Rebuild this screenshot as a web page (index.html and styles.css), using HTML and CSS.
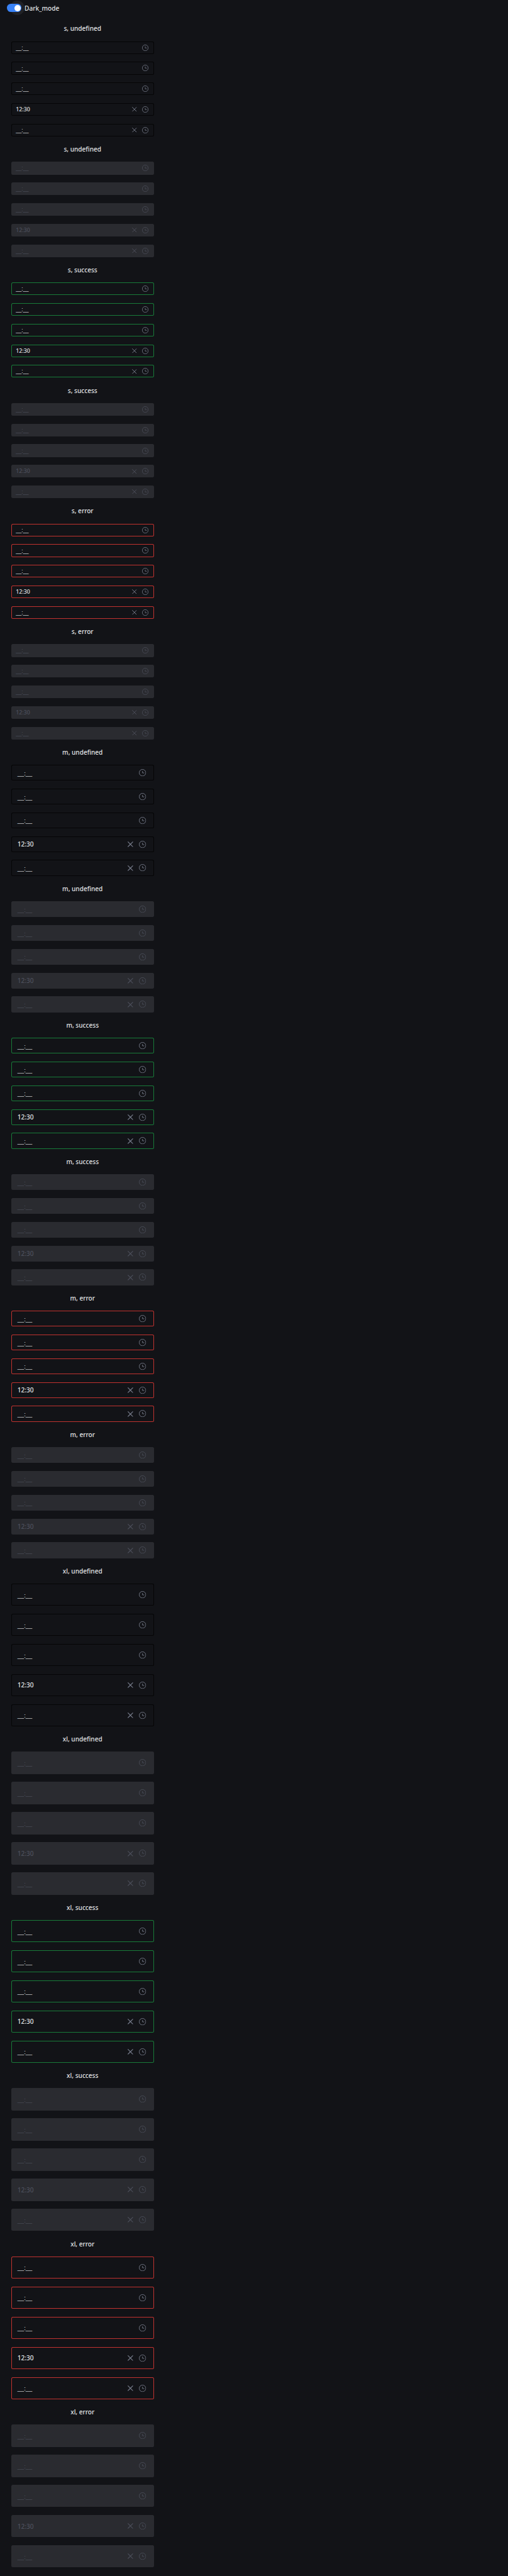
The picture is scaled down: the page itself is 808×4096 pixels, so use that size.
FILE: index.html
```html
<!DOCTYPE html>
<html lang="en">
<head>
<meta charset="utf-8">
<title>Time input</title>
<link rel="stylesheet" href="styles.css">
</head>
<body>
<svg class="sprite" aria-hidden="true">
  <symbol id="clock" viewBox="0 0 18 18"><circle cx="9" cy="9" r="8.3"/><path d="M9 4.8V9.5H13.4"/></symbol>
  <symbol id="cross" viewBox="0 0 14 14"><path d="M.5.5l13 13M13.5.5l-13 13"/></symbol>
</svg>
<header class="toolbar">
  <span class="switch"><span class="thumb"></span></span>
  <span class="switch-label">Dark_mode</span>
</header>
<main class="stories" id="stories"></main>
<script src="main.js"></script>
</body>
</html>
```
FILE: styles.css
```css
:root {
  --u: 0.631px;
  --bg: #121317;
  --text: #e1e3e6;
  --icon: #7e8494;
}
* { box-sizing: border-box; }
body {
  margin: 0;
  background: var(--bg);
  color: var(--text);
  font-family: "Noto Sans", sans-serif;
  font-size: calc(16 * var(--u));
  font-weight: 500;
  overflow: hidden;
}
.sprite { display: none; }
.toolbar {
  display: flex;
  align-items: center;
  height: calc(40 * var(--u));
  padding-left: calc(18 * var(--u));
}
.switch {
  display: flex;
  align-items: center;
  justify-content: flex-end;
  width: calc(36 * var(--u));
  height: calc(20 * var(--u));
  padding-right: calc(2 * var(--u));
  border-radius: calc(10 * var(--u));
  background: #3a83f7;
}
.thumb {
  position: relative;
  width: calc(16 * var(--u));
  height: calc(16 * var(--u));
  border-radius: 50%;
  background: #fff;
}
/* Halo sits behind the track so the track keeps its own colour */
.thumb::before {
  content: "";
  position: absolute;
  z-index: -1;
  inset: calc(-10 * var(--u));
  border-radius: 50%;
  background: #212226;
}
.switch-label { margin-left: calc(8 * var(--u)); }
.stories {
  width: calc(360 * var(--u));
  margin-left: calc(28 * var(--u));
}
.title {
  display: flex;
  align-items: center;
  justify-content: center;
  height: calc(64 * var(--u));
}
.fields {
  display: flex;
  flex-direction: column;
  gap: calc(20 * var(--u));
}
.field {
  display: flex;
  align-items: center;
  height: calc(40 * var(--u));
  padding: 0 calc(19 * var(--u)) 0 calc(16 * var(--u));
  border-radius: calc(4 * var(--u));
  box-shadow: inset 0 0 0 1px var(--line, #050506);
}
.value { flex: 1; }
.mask {
  font-family: "Liberation Sans", sans-serif;
  font-size: 0.925em;
  font-weight: 400;
}
.icon {
  fill: none;
  stroke: var(--icon);
  stroke-width: 1.35;
  overflow: visible;
}
.clock { width: calc(18 * var(--u)); height: calc(18 * var(--u)); }
.cross {
  width: calc(14 * var(--u));
  height: calc(14 * var(--u));
  margin-right: calc(16 * var(--u));
  stroke-width: 1.7;
}
.size-s .field {
  height: calc(32 * var(--u));
  padding: 0 calc(14 * var(--u)) 0 calc(12 * var(--u));
  font-size: calc(14 * var(--u));
}
.size-s .clock { width: calc(16 * var(--u)); height: calc(16 * var(--u)); }
.size-s .cross {
  width: calc(12 * var(--u));
  height: calc(12 * var(--u));
  margin-right: calc(14 * var(--u));
}
.size-xl .field { height: calc(56 * var(--u)); }
.success { --line: #187b39; }
.error { --line: #c0322f; }
.disabled { --icon: #4d505c; }
.disabled .field {
  background: #2a2b30;
  color: #4d505c;
  box-shadow: none;
}
```
FILE: main.js
```js
const sizes = ["s", "m", "xl"];
const states = ["undefined", "success", "error"];
const rows = [
  { value: "" },
  { value: "" },
  { value: "" },
  { value: "12:30", clear: true },
  { value: "", clear: true },
];
const icon = (name) => `<svg class="icon ${name}"><use href="#${name}"/></svg>`;
const field = ({ value, clear }) => `
  <div class="field">
    <span class="value">${value || '<span class="mask">__:__</span>'}</span>
    ${clear ? icon("cross") : ""}${icon("clock")}
  </div>`;

let html = "";
for (const size of sizes)
  for (const state of states)
    for (const mode of ["", "disabled"])
      html += `
<section class="size-${size} ${state} ${mode}">
  <div class="title">${size}, ${state}</div>
  <div class="fields">${rows.map(field).join("")}</div>
</section>`;
document.getElementById("stories").innerHTML = html;
```
